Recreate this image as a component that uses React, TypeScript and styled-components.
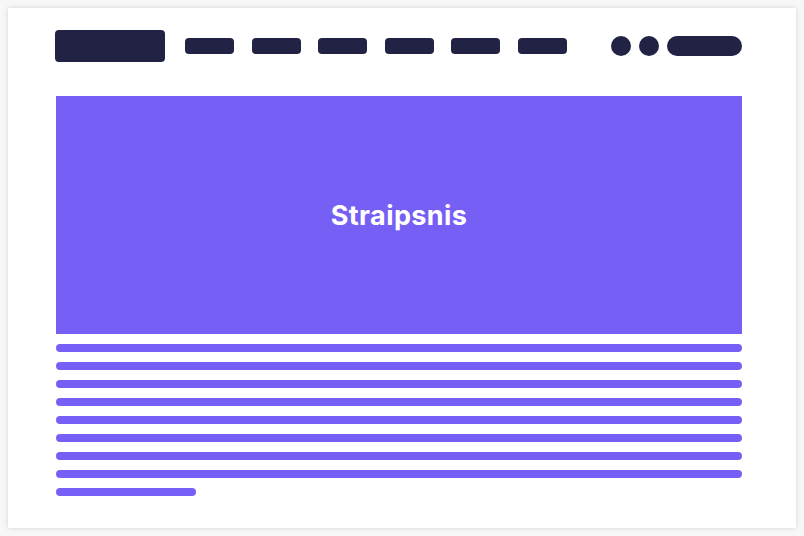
import React from 'react'
import styled, { createGlobalStyle } from 'styled-components'

const GlobalStyle = createGlobalStyle`
  html, body {
    margin: 0;
    padding: 0;
    background: #f7f7f8;
    font-family: Inter, "Noto Sans", sans-serif;
  }
`

const Card = styled.div`
  box-sizing: border-box;
  margin: 8px;
  width: 788px;
  height: 520px;
  background: #fff;
  box-shadow: 0 0 5px rgba(0, 0, 0, 0.14);
  padding: 22px 54px 0 48px;
  display: flex;
  flex-direction: column;
`

const Header = styled.div`
  display: flex;
  align-items: center;
  height: 32px;
`

const Logo = styled.div`
  width: 110px;
  height: 32px;
  margin-left: -1px;
  border-radius: 4px;
  background: #212244;
`

const Nav = styled.div`
  display: flex;
  gap: 17.6px;
  margin-left: 20px;
`

const NavItem = styled.div`
  width: 49px;
  height: 16px;
  border-radius: 4px;
  background: #212244;
`

const Actions = styled.div`
  display: flex;
  align-items: center;
  gap: 8px;
  margin-left: auto;
`

const Dot = styled.div`
  width: 20px;
  height: 20px;
  border-radius: 50%;
  background: #212244;
`

const Pill = styled.div`
  width: 75px;
  height: 20px;
  border-radius: 10px;
  background: #212244;
`

const Hero = styled.div`
  margin-top: 34px;
  height: 238px;
  background: #765ff5;
  display: flex;
  align-items: center;
  justify-content: center;
`

const HeroTitle = styled.h1`
  margin: 0;
  color: #fff;
  font-family: Inter, "Noto Sans", sans-serif;
  font-weight: 700;
  font-size: 27px;
  letter-spacing: 0.4px;
`

const Lines = styled.div`
  margin-top: 10px;
  display: flex;
  flex-direction: column;
  gap: 10px;
`

const Line = styled.div<{ $width?: number }>`
  height: 8px;
  width: ${(p) => (p.$width ? `${p.$width}px` : '100%')};
  border-radius: 4px;
  background: #765ff5;
`

export default function App() {
  return (
    <>
      <GlobalStyle />
      <Card>
        <Header>
          <Logo />
          <Nav>
            {[0, 1, 2, 3, 4, 5].map((i) => (
              <NavItem key={i} />
            ))}
          </Nav>
          <Actions>
            <Dot />
            <Dot />
            <Pill />
          </Actions>
        </Header>
        <Hero>
          <HeroTitle>Straipsnis</HeroTitle>
        </Hero>
        <Lines>
          {[0, 1, 2, 3, 4, 5, 6, 7].map((i) => (
            <Line key={i} />
          ))}
          <Line $width={140} />
        </Lines>
      </Card>
    </>
  )
}
